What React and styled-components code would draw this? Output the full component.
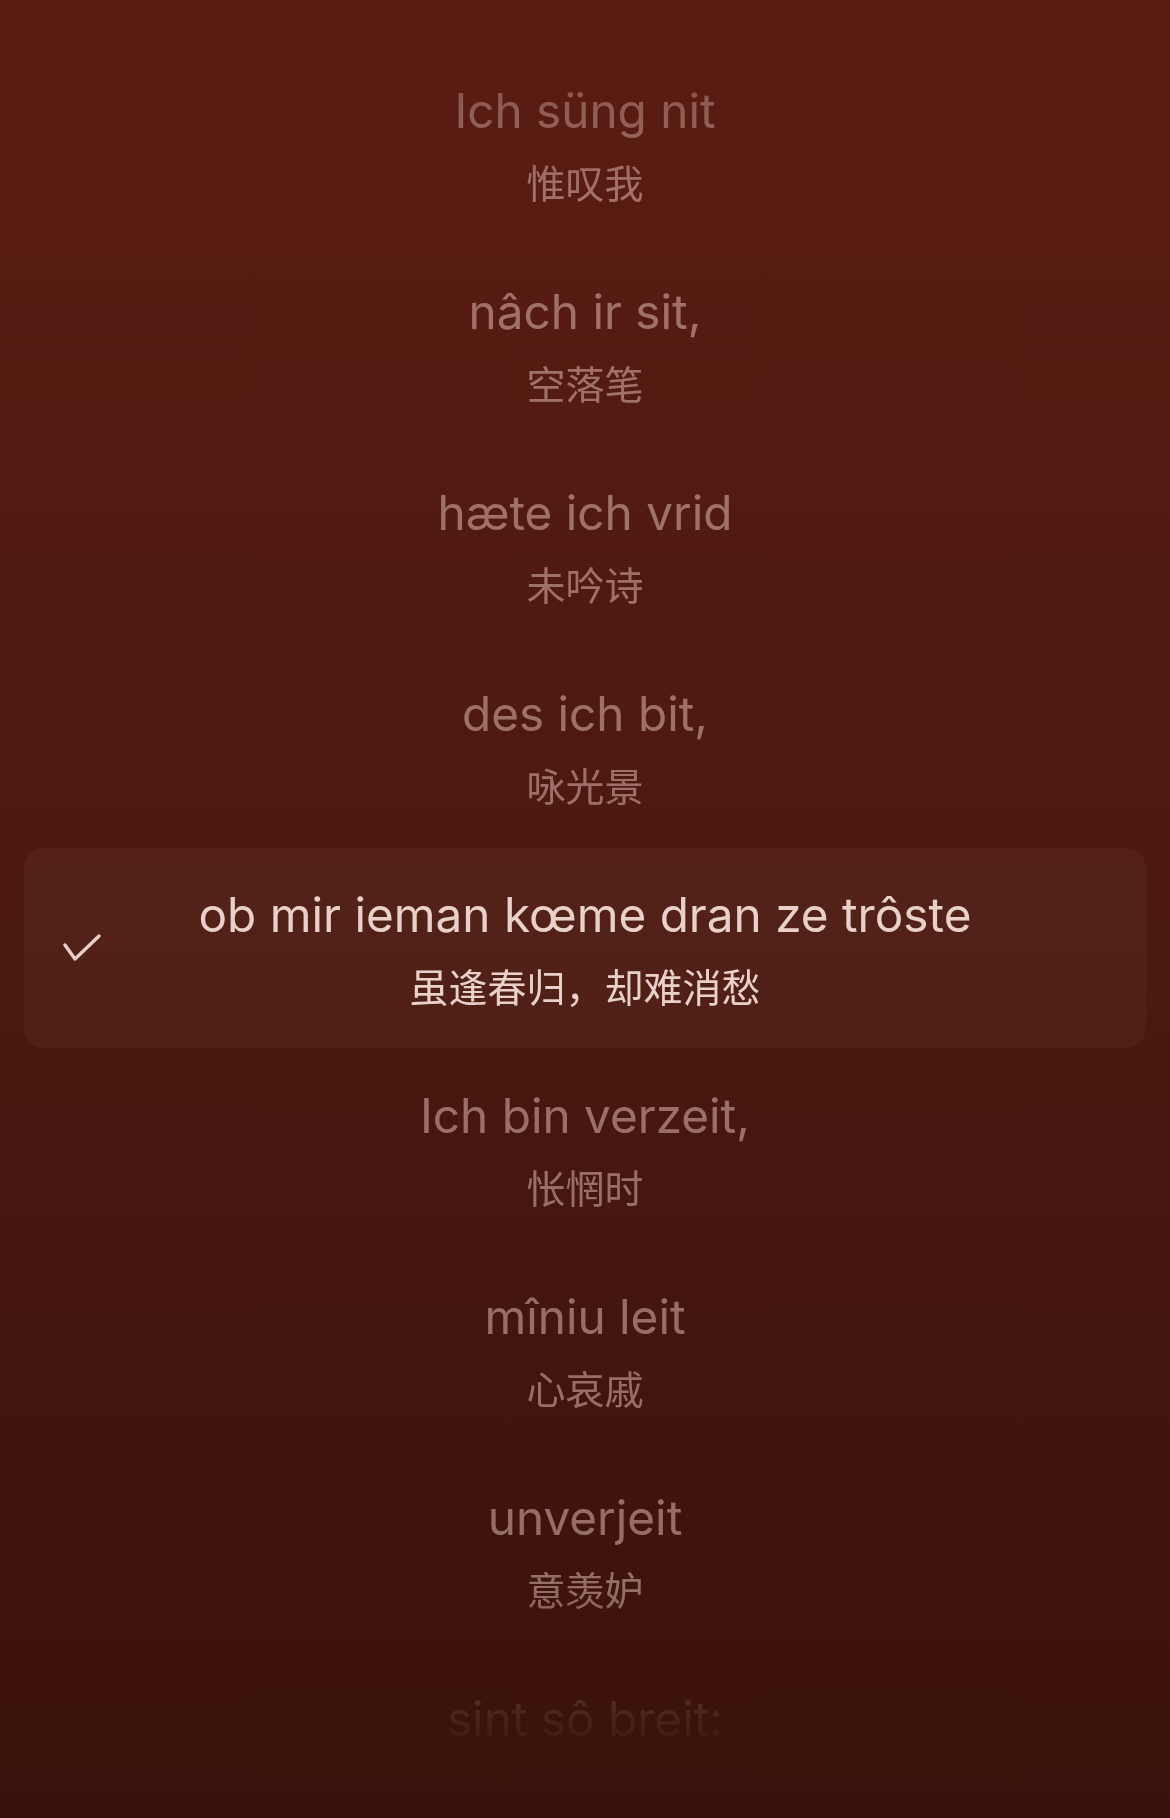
import React from "react";
import styled, { createGlobalStyle } from "styled-components";

const Global = createGlobalStyle`
  html, body { margin: 0; padding: 0; }
  body { background: #3a120b; }
  #root { width: 1170px; }
`;

const Page = styled.div`
  width: 1170px;
  height: 1818px;
  overflow: hidden;
  background: linear-gradient(180deg, #5b1c12 0%, #4b1910 50%, #3a120b 100%);
  font-family: Inter, "Noto Sans", "Noto Sans CJK SC", sans-serif;
`;

const fade = `linear-gradient(
    180deg,
    rgba(0, 0, 0, 0.35) 0px,
    rgba(0, 0, 0, 0.75) 111px,
    #000 190px,
    #000 1590px,
    rgba(0, 0, 0, 0.16) 1718px,
    rgba(0, 0, 0, 0) 1770px
  )`;

const List = styled.div`
  display: flex;
  flex-direction: column;
  gap: 1px;
  padding: 44px 24px 0;
  -webkit-mask-image: ${fade};
  mask-image: ${fade};
`;

const Row = styled.div`
  height: 200px;
  display: grid;
  grid-template-columns: 1fr auto 1fr;
  align-items: center;
  border-radius: 20px;
  background: ${(p) => (p.$active ? "rgba(255, 225, 215, 0.04)" : "transparent")};
`;

const CheckSlot = styled.div`
  justify-self: start;
  padding-left: 39px;
  padding-top: 2px;
  display: flex;
  color: #e8cec7;
`;

const Lines = styled.div`
  grid-column: 2;
  display: flex;
  flex-direction: column;
  align-items: center;
  gap: 15px;
  color: ${(p) => (p.$active ? "#e9d0c9" : "rgba(236, 200, 192, 0.5)")};
`;

const Original = styled.div`
  font-family: Inter, "Noto Sans", sans-serif;
  font-size: 47.7px;
  line-height: 58px;
  font-weight: 400;
  white-space: nowrap;
`;

const Translation = styled.div`
  font-family: "Noto Sans CJK SC", "Noto Sans", sans-serif;
  font-size: 39px;
  line-height: 52px;
  font-weight: 400;
  white-space: nowrap;
`;

const Check = () => (
  <svg width="38" height="30" viewBox="0 0 38 30" fill="none">
    <polyline
      points="2,11 12,25 36,2"
      stroke="currentColor"
      strokeWidth="3.4"
      strokeLinecap="round"
      strokeLinejoin="round"
    />
  </svg>
);

const lyrics = [
  ["Ich süng nit", "惟叹我"],
  ["nâch ir sit,", "空落笔"],
  ["hæte ich vrid", "未吟诗"],
  ["des ich bit,", "咏光景"],
  ["ob mir ieman kœme dran ze trôste", "虽逢春归，却难消愁", true],
  ["Ich bin verzeit,", "怅惘时"],
  ["mîniu leit", "心哀戚"],
  ["unverjeit", "意羡妒"],
  ["sint sô breit:", "情难抑"],
];

export default function App() {
  return (
    <>
      <Global />
      <Page>
        <List>
          {lyrics.map(([de, zh, active]) => (
            <Row key={de} $active={active}>
              {active ? (
                <CheckSlot>
                  <Check />
                </CheckSlot>
              ) : (
                <span />
              )}
              <Lines $active={active}>
                <Original>{de}</Original>
                <Translation>{zh}</Translation>
              </Lines>
            </Row>
          ))}
        </List>
      </Page>
    </>
  );
}
